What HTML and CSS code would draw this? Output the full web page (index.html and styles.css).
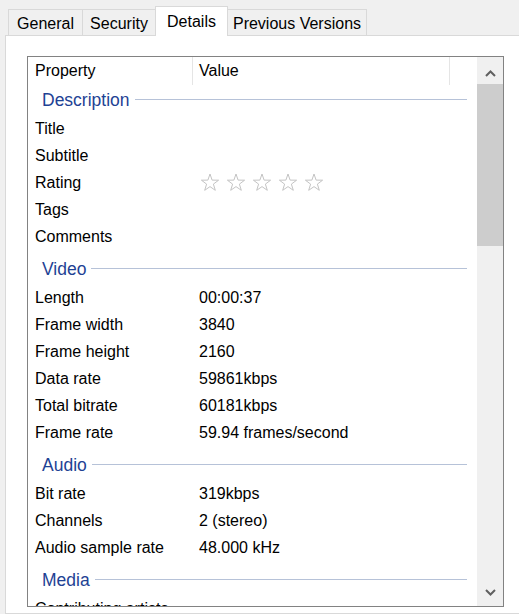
FILE: index.html
```html
<!DOCTYPE html>
<html lang="en">
<head>
    <meta charset="UTF-8">
    <title>Details</title>
    <link rel="stylesheet" href="styles.css">
</head>
<body>
    <!-- Tab strip -->
    <div class="tabs">
        <div class="tab tab-general">General</div>
        <div class="tab tab-security">Security</div>
        <div class="tab tab-details active">Details</div>
        <div class="tab tab-versions">Previous Versions</div>
    </div>

    <div class="panel">
        <div class="listbox">
            <div class="list">
                <div class="list-head">
                    <div class="head-prop">Property</div>
                    <div class="head-value">Value</div>
                    <div class="head-rest"></div>
                </div>

                <div class="group first"><span>Description</span><div class="group-line"></div></div>
                <div class="row"><div class="prop">Title</div><div class="val"></div></div>
                <div class="row"><div class="prop">Subtitle</div><div class="val"></div></div>
                <div class="row">
                    <div class="prop">Rating</div>
                    <div class="val">
                        <svg class="stars" width="130" height="20" viewBox="0 0 130 20">
                            <defs>
                                <polygon id="star" points="10,1 12.1,7.1 18.6,7.2 13.4,11.1 15.3,17.3 10,13.6 4.7,17.3 6.6,11.1 1.4,7.2 7.9,7.1"/>
                            </defs>
                            <use href="#star" x="1"/>
                            <use href="#star" x="27"/>
                            <use href="#star" x="53"/>
                            <use href="#star" x="79"/>
                            <use href="#star" x="105"/>
                        </svg>
                    </div>
                </div>
                <div class="row"><div class="prop">Tags</div><div class="val"></div></div>
                <div class="row"><div class="prop">Comments</div><div class="val"></div></div>

                <div class="group"><span>Video</span><div class="group-line"></div></div>
                <div class="row"><div class="prop">Length</div><div class="val">00:00:37</div></div>
                <div class="row"><div class="prop">Frame width</div><div class="val">3840</div></div>
                <div class="row"><div class="prop">Frame height</div><div class="val">2160</div></div>
                <div class="row"><div class="prop">Data rate</div><div class="val">59861kbps</div></div>
                <div class="row"><div class="prop">Total bitrate</div><div class="val">60181kbps</div></div>
                <div class="row"><div class="prop">Frame rate</div><div class="val">59.94 frames/second</div></div>

                <div class="group"><span>Audio</span><div class="group-line"></div></div>
                <div class="row"><div class="prop">Bit rate</div><div class="val">319kbps</div></div>
                <div class="row"><div class="prop">Channels</div><div class="val">2 (stereo)</div></div>
                <div class="row"><div class="prop">Audio sample rate</div><div class="val">48.000 kHz</div></div>

                <div class="group"><span>Media</span><div class="group-line"></div></div>
                <div class="row"><div class="prop">Contributing artists</div><div class="val"></div></div>
            </div>

            <!-- Vertical scrollbar -->
            <div class="scrollbar">
                <div class="scroll-btn up">
                    <svg width="11" height="7" viewBox="0 0 11 7"><polyline points="1,6 5.5,1.5 10,6"/></svg>
                </div>
                <div class="thumb"></div>
                <div class="track"></div>
                <div class="scroll-btn down">
                    <svg width="11" height="7" viewBox="0 0 11 7"><polyline points="1,1 5.5,5.5 10,1"/></svg>
                </div>
            </div>
        </div>
    </div>
</body>
</html>
```

FILE: styles.css
```css
body {
    margin: 0;
    padding: 0;
    background-color: #f0f0f0;
    font-family: "Liberation Sans", Arial, sans-serif;
    font-size: 16px;
    color: #000;
    height: 614px;
    overflow: hidden;
}

/* Tabs */
.tabs {
    display: flex;
    align-items: flex-end;
    height: 35px;
    padding-left: 8px;
}

.tab {
    box-sizing: border-box;
    height: 26px;
    line-height: 27px;
    text-align: center;
    background-color: #f0f0f0;
    border-top: 1px solid #d9d9d9;
    border-right: 1px solid #d9d9d9;
    white-space: nowrap;
}

.tab-general {
    width: 75px;
    border-left: 1px solid #d9d9d9;
}

.tab-security {
    width: 73px;
}

.tab-details {
    width: 72px;
}

.tab-versions {
    width: 139px;
}

.tab.active {
    position: relative;
    z-index: 1;
    height: 30px;
    line-height: 29px;
    margin-bottom: -1px;
    margin-left: -1px;
    width: 73px;
    background-color: #fff;
    border-left: 1px solid #d9d9d9;
}

/* Panel */
.panel {
    box-sizing: border-box;
    margin-left: 5px;
    margin-right: -20px;
    height: 579px;
    background-color: #fff;
    border: 1px solid #d9d9d9;
    padding: 20px 0 0 21px;
}

.listbox {
    box-sizing: border-box;
    display: flex;
    width: 477px;
    height: 551px;
    border: 1px solid #828282;
}

.list {
    width: 449px;
    overflow: hidden;
}

.list-head {
    display: flex;
    height: 28px;
    line-height: 28px;
}

.head-prop {
    box-sizing: border-box;
    width: 165px;
    padding-left: 7px;
    border-right: 1px solid #e5e5e5;
}

.head-value {
    box-sizing: border-box;
    width: 257px;
    padding-left: 6px;
    border-right: 1px solid #e5e5e5;
}

.head-rest {
    flex: 1;
}

/* Group headers */
.group {
    box-sizing: border-box;
    display: flex;
    align-items: center;
    height: 34px;
    padding: 5px 10px 0 14px;
    color: #1e4294;
    font-size: 17.5px;
}

.group.first {
    height: 30px;
    padding-top: 0;
}

.group-line {
    flex: 1;
    height: 1px;
    margin-left: 5px;
    margin-top: -2px;
    background-color: #b6c2d8;
}

/* Property rows */
.row {
    display: flex;
    align-items: center;
    height: 27px;
    white-space: nowrap;
}

.prop {
    box-sizing: border-box;
    width: 171px;
    padding-left: 7px;
}

.val {
    flex: 1;
}

.stars {
    display: block;
    fill: none;
    stroke: #c4c4c4;
    stroke-width: 1;
}

/* Scrollbar */
.scrollbar {
    display: flex;
    flex-direction: column;
    width: 26px;
    background-color: #f0f0f0;
}

.scroll-btn {
    display: flex;
    justify-content: center;
    height: 27px;
}

.scroll-btn svg {
    fill: none;
    stroke: #606060;
    stroke-width: 2;
}

.scroll-btn.up {
    align-items: flex-end;
    box-sizing: border-box;
    padding-bottom: 7px;
}

.scroll-btn.down {
    align-items: center;
}

.thumb {
    height: 162px;
    background-color: #cdcdcd;
}

.track {
    flex: 1;
}
```
